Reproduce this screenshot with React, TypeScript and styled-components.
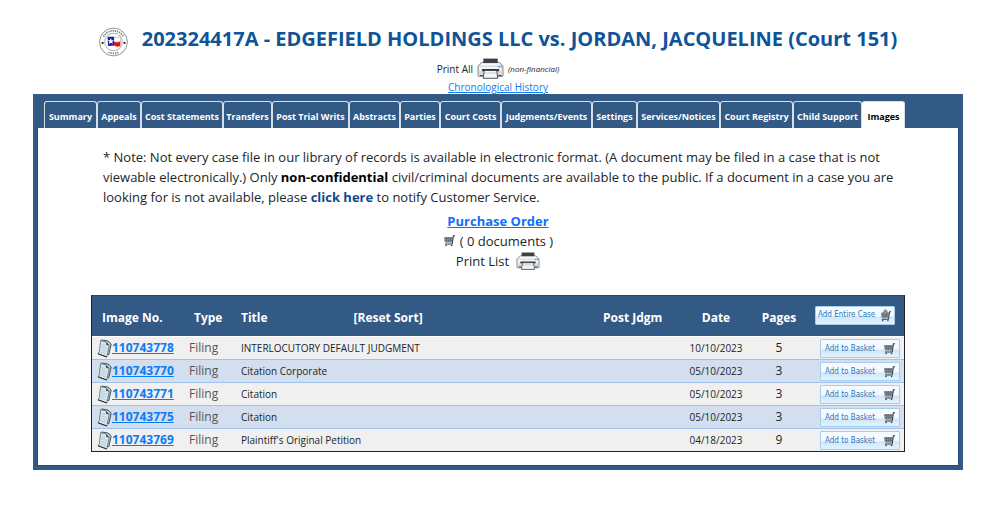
import React from "react";
import styled, { createGlobalStyle } from "styled-components";

const GlobalStyle = createGlobalStyle`
  *, *::before, *::after { box-sizing: border-box; }
  body {
    margin: 0;
    background: #fff;
    color: #212529;
    font-family: "Open Sans", "Noto Sans", sans-serif;
    font-size: 13px;
    line-height: 20px;
  }
`;

const Page = styled.main`
  padding: 24px 37px 38px 33px;
`;

const Header = styled.header`
  display: flex;
  flex-direction: column;
  align-items: center;
`;

const TitleRow = styled.div`
  display: flex;
  align-items: center;
  gap: 14px;
  height: 30px;
  margin-bottom: 3px;
  svg { flex: none; margin-top: 5px; }
`;

const Title = styled.h1`
  margin: 0;
  color: #0f5499;
  font-size: 20px;
  line-height: 30px;
  font-weight: 700;
  white-space: nowrap;
`;

const PrintAll = styled.div`
  display: flex;
  align-items: center;
  gap: 4px;
  height: 23px;
  font-size: 10px;
  i { font-size: 8px; }
`;

const IconButton = styled.button`
  display: flex;
  padding: 0;
  border: 0;
  background: none;
  cursor: pointer;
`;

const HistoryLink = styled.a`
  height: 14px;
  color: #0d7bf2;
  font-size: 10px;
  line-height: 14px;
`;

const Frame = styled.section`
  border: 4px solid #335985;
  border-top-width: 7px;
  box-shadow: inset 0 0 0 1px #1f4a7c;
  background: #fff;
`;

const Tabs = styled.nav`
  display: flex;
  height: 27px;
  padding-left: 7px;
  background: #335985;
`;

const Tab = styled.a<{ $width: number; $active?: boolean }>`
  flex: 0 1 ${(p) => p.$width}px;
  border: 1px solid #d5dfea;
  border-bottom: 0;
  border-left-color: ${(p) => (p.$active ? "#fff" : "#d5dfea")};
  border-radius: 3px 3px 0 0;
  background: ${(p) => (p.$active ? "#fff" : "#335985")};
  color: ${(p) => (p.$active ? "#000" : "#fff")};
  font-size: 9px;
  font-weight: 700;
  line-height: 30px;
  text-align: center;
  text-decoration: none;
  white-space: nowrap;
`;

const Content = styled.div`
  padding: 19px 54px 14px;
`;

const Note = styled.p`
  margin: 0 2px 4px 12px;
  a { color: #0f4a8a; font-weight: 700; text-decoration: none; }
  b { color: #000; }
`;

const Actions = styled.div`
  display: flex;
  flex-direction: column;
  align-items: center;
  margin-bottom: 24px;
`;

const ActionRow = styled.div<{ $gap: number }>`
  display: flex;
  align-items: center;
  gap: ${(p) => p.$gap}px;
  height: 20px;
`;

const OrderLink = styled.a`
  color: #0d6efd;
  font-weight: 700;
`;

const Table = styled.table`
  width: 100%;
  table-layout: fixed;
  border-collapse: separate;
  border-spacing: 0;
  border: 1px solid #222;
  border-top-color: #1f4373;
  thead tr { height: 40px; background: #335985; }
  tbody tr { height: 23px; background: #f0f0f0; }
  tbody tr:nth-child(even) { background: #d3deee; }
  tbody td { border-top: 1px solid #9fbfec; }
  tbody tr:first-child td { border-top-color: #fff; }
`;

const Th = styled.th<{ $align?: string; $indent?: number }>`
  padding: 4px 0 0 ${(p) => p.$indent ?? 0}px;
  color: #fff;
  font-size: 12px;
  line-height: 16px;
  text-align: ${(p) => p.$align ?? "center"};
  white-space: nowrap;
`;

const HeadTitle = styled.div`
  display: flex;
  gap: 86px;
`;

const ResetLink = styled.a`
  color: #fff;
  text-decoration: none;
`;

const Td = styled.td<{ $align?: string; $size?: number; $color?: string; $indent?: number }>`
  padding: 0 0 0 ${(p) => p.$indent ?? 0}px;
  color: ${(p) => p.$color ?? "#212529"};
  font-size: ${(p) => p.$size ?? 10}px;
  line-height: 20px;
  text-align: ${(p) => p.$align ?? "left"};
  white-space: nowrap;
`;

const ImageLink = styled.a`
  display: flex;
  align-items: center;
  padding-left: 5px;
  color: #0d7bf2;
  font-size: 12px;
  font-weight: 700;
  line-height: 20px;
`;

const BasketButton = styled.button`
  display: inline-flex;
  align-items: center;
  justify-content: space-between;
  width: 80px;
  height: 19px;
  padding: 0 4px;
  border: 1px solid #a5cdec;
  border-radius: 1px;
  background: linear-gradient(#f4faff 0 50%, #cfe7fa 60%, #e2f3ff);
  color: #2a77b8;
  font-family: "DejaVu Sans Condensed", "DejaVu Sans", sans-serif;
  font-size: 8px;
  line-height: 16px;
  white-space: nowrap;
  vertical-align: middle;
  cursor: pointer;
`;

const CaseButton = styled(BasketButton)`
  padding: 0 3px 0 2px;
  margin-bottom: 6px;
`;

const Seal = () => (
  <svg width="29" height="30" viewBox="0 0 29 30" role="img" aria-label="County seal">
    <circle cx="14.5" cy="15" r="13.9" fill="#fff" stroke="#777" strokeWidth=".8" />
    <circle cx="14.5" cy="15" r="8.8" fill="#fff" stroke="#888" strokeWidth=".7" />
    <path d="M4.6 9.5a11.4 11.4 0 0 1 19.8 0" fill="none" stroke="#777" strokeWidth="1.8" strokeDasharray="1.2 1" />
    <path d="M9.5 25.2a11.4 11.4 0 0 0 10 0" fill="none" stroke="#777" strokeWidth="1.8" strokeDasharray="1.2 1" />
    <rect x="2.7" y="15" width="1.8" height="1.8" fill="#111" />
    <rect x="24.6" y="15" width="1.8" height="1.8" fill="#111" />
    <path d="M8.6 9.8h6.4v8.6l-6 .6z" fill="#1717b8" />
    <path d="M15 10.4q3 1 6.4-.6v5h-6.4z" fill="#fff" stroke="#888" strokeWidth=".4" />
    <path d="M15 15q3 .8 6.4-.6v4.4q-3 1.8-6.4-.2z" fill="#e01717" />
    <path d="m11.8 11 .9 2.2 2.3.1-1.8 1.4.6 2.2-2-1.2-2 1.2.6-2.2-1.8-1.4 2.3-.1z" fill="#fff" />
  </svg>
);

const Printer = ({ width, height }: { width: number; height: number }) => (
  <svg width={width} height={height} viewBox="0 0 28 21" preserveAspectRatio="none" aria-hidden="true">
    <path d="M4.5 4.5h19l3.5 3.6v9.4q0 1-1 1H2q-1 0-1-1V8.1z" fill="#d9dde0" stroke="#777c82" strokeWidth=".8" />
    <path d="M2.5 9h23v4h-23z" fill="#f4f6f7" />
    <rect x="6.5" y=".6" width="15" height="4.6" fill="#3c3f45" />
    <path d="M5.2 5.2h17.6l1.2 2.3H4z" fill="#f8f9fa" />
    <rect x="5" y="11" width="18" height="2.2" rx=".8" fill="#303338" />
    <path d="M7.5 12.5h13l1 7.8h-15z" fill="#f5f5f5" stroke="#4a4d52" strokeWidth="1" />
    <path d="M8.5 15h11" stroke="#c8cbce" />
    <rect x="22.2" y="8" width="1.6" height="1.4" fill="#2a91e0" />
    <rect x="24.5" y="8" width="1.2" height="1.4" fill="#2a91e0" />
    <path d="M3 17.5h3M22 17.5h3.5" stroke="#43464b" strokeWidth="1.2" />
  </svg>
);

const CartIcon = ({ bag }: { bag?: boolean }) => (
  <svg width={bag ? 10 : 12} height={bag ? 13 : 12} viewBox={bag ? "0 0 10 13" : "0 0 12 12"} aria-hidden="true">
    {bag && <path d="M2 6V3h5v3zM3.2 3V1.4q1.2-1.6 2.4 0V3" fill="#a2a9ad" stroke="#697178" strokeWidth=".7" />}
    <g transform={bag ? "translate(-1 2) scale(.92)" : undefined}>
      <path d="M1 2h8.8L9 7.6H1.8z" fill="#8d969b" />
      <path d="M1.2 3.6h8.2M1.5 5.4h7.6M3.4 2l.3 5.5M5.4 2v5.5M7.4 2l-.2 5.5" stroke="#5b656b" strokeWidth=".6" />
      <path d="M12 .8h-1.6L9.2 9H2" fill="none" stroke="#343d44" strokeWidth="1.1" />
      <circle cx="3" cy="10.5" r=".8" fill="#343d44" />
      <circle cx="8.6" cy="10.5" r=".8" fill="#343d44" />
    </g>
  </svg>
);

const PagesIcon = () => (
  <svg width="15" height="19" viewBox="0 0 15 19" aria-hidden="true">
    <path d="M4.6 1 11 2l3.2 3-2.4 10.6-8.8-.6z" fill="#b9ccd5" stroke="#39454c" strokeWidth=".9" />
    <path d="M3.6 1.6 8.8 2.8l3.4 3.6L9.8 18 1 14.8q1.8-2 1.6-5z" fill="#d5e6ee" stroke="#5c6a71" strokeWidth=".8" />
    <path d="m8.8 2.8.4 3.2 3 .4z" fill="#46535b" />
    <path d="m4.4 5.8 3.6.8M4.2 8.2l5.4 1.2M3.8 10.6l5.4 1.4M3.2 13l5.4 1.6" stroke="#a4c1ce" strokeWidth=".7" />
    <path d="m1 14.8 8.8 3.2" stroke="#222c32" strokeWidth="1" />
  </svg>
);

const tabs: [string, number][] = [
  ["Summary", 53],
  ["Appeals", 44],
  ["Cost Statements", 82],
  ["Transfers", 49],
  ["Post Trial Writs", 77],
  ["Abstracts", 51],
  ["Parties", 40],
  ["Court Costs", 61],
  ["Judgments/Events", 91],
  ["Settings", 45],
  ["Services/Notices", 83],
  ["Court Registry", 73],
  ["Child Support", 69],
  ["Images", 43],
];

const documents = [
  { id: "110743778", title: "INTERLOCUTORY DEFAULT JUDGMENT", date: "10/10/2023", pages: 5 },
  { id: "110743770", title: "Citation Corporate", date: "05/10/2023", pages: 3 },
  { id: "110743771", title: "Citation", date: "05/10/2023", pages: 3 },
  { id: "110743775", title: "Citation", date: "05/10/2023", pages: 3 },
  { id: "110743769", title: "Plaintiff's Original Petition", date: "04/18/2023", pages: 9 },
];

export default function App() {
  return (
    <>
      <GlobalStyle />
      <Page>
        <Header>
          <TitleRow>
            <Seal />
            <Title>202324417A - EDGEFIELD HOLDINGS LLC vs. JORDAN, JACQUELINE (Court 151)</Title>
          </TitleRow>
          <PrintAll>
            <span>Print All</span>
            <IconButton type="button" aria-label="Print all">
              <Printer width={27} height={21} />
            </IconButton>
            <i>(non-financial)</i>
          </PrintAll>
          <HistoryLink href="#history">Chronological History</HistoryLink>
        </Header>
        <Frame>
          <Tabs>
            {tabs.map(([label, width]) => (
              <Tab key={label} href="#tab" $width={width} $active={label === "Images"}>
                {label}
              </Tab>
            ))}
          </Tabs>
          <Content>
            <Note>
              * Note: Not every case file in our library of records is available in electronic format. (A document may
              be filed in a case that is not viewable electronically.) Only <b>non-confidential</b> civil/criminal
              documents are available to the public. If a document in a case you are looking for is not available,
              please <a href="#service">click here</a> to notify Customer Service.
            </Note>
            <Actions>
              <OrderLink href="#order">Purchase Order</OrderLink>
              <ActionRow $gap={5}>
                <CartIcon />
                <span>( 0 documents )</span>
              </ActionRow>
              <ActionRow $gap={7}>
                <span>Print List</span>
                <IconButton type="button" aria-label="Print list">
                  <Printer width={24} height={18} />
                </IconButton>
              </ActionRow>
            </Actions>
            <Table>
              <colgroup>
                <col style={{ width: 97 }} />
                <col style={{ width: 52 }} />
                <col />
                <col style={{ width: 80 }} />
                <col style={{ width: 70 }} />
                <col style={{ width: 56 }} />
                <col style={{ width: 97 }} />
              </colgroup>
              <thead>
                <tr>
                  <Th $align="left" $indent={10}>Image No.</Th>
                  <Th $align="left" $indent={5}>Type</Th>
                  <Th $align="left">
                    <HeadTitle>
                      <span>Title</span>
                      <ResetLink href="#sort">[Reset Sort]</ResetLink>
                    </HeadTitle>
                  </Th>
                  <Th $align="left" $indent={2}>Post Jdgm</Th>
                  <Th>Date</Th>
                  <Th>Pages</Th>
                  <Th $align="left" $indent={8}>
                    <CaseButton type="button">
                      Add Entire Case
                      <CartIcon bag />
                    </CaseButton>
                  </Th>
                </tr>
              </thead>
              <tbody>
                {documents.map((doc) => (
                  <tr key={doc.id}>
                    <Td>
                      <ImageLink href="#image">
                        <PagesIcon />
                        {doc.id}
                      </ImageLink>
                    </Td>
                    <Td $size={12} $color="#555">Filing</Td>
                    <Td>{doc.title}</Td>
                    <Td />
                    <Td $align="center">{doc.date}</Td>
                    <Td $align="center" $size={12}>{doc.pages}</Td>
                    <Td $indent={13}>
                      <BasketButton type="button">
                        Add to Basket
                        <CartIcon />
                      </BasketButton>
                    </Td>
                  </tr>
                ))}
              </tbody>
            </Table>
          </Content>
        </Frame>
      </Page>
    </>
  );
}
